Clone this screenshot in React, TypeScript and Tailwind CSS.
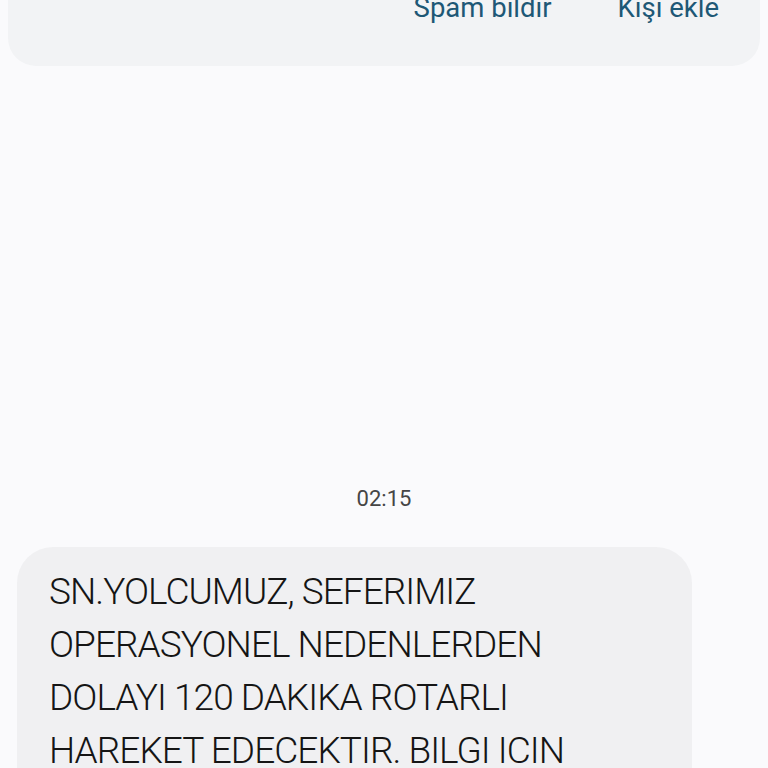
export default function App() {
  const lines = [
    "SN.YOLCUMUZ, SEFERIMIZ",
    "OPERASYONEL NEDENLERDEN",
    "DOLAYI 120 DAKIKA ROTARLI",
    "HAREKET EDECEKTIR. BILGI ICIN",
    "0850 222 00 00",
  ];
  return (
    <div
      className="w-[768px] h-[768px] overflow-hidden bg-[#fafafc] flex flex-col"
      style={{ fontFamily: "Roboto, 'Noto Sans', sans-serif" }}
    >
      <div className="mx-2 mt-[-40px] h-[106px] shrink-0 rounded-[28px] bg-[#f2f3f5] flex justify-end items-start pr-[41px] gap-[66px]">
        <span className="mt-[32px] text-[27.5px] leading-[32px] text-[#1e5876]">Spam bildir</span>
        <span className="mt-[32px] text-[27.5px] leading-[32px] text-[#1e5876]">Kişi ekle</span>
      </div>
      <div className="mt-[418px] h-[30px] text-center text-[22px] leading-[30px] text-[#454545]">02:15</div>
      <div className="mt-[33px] ml-[17px] w-[675px] shrink-0 rounded-[36px] bg-[#f0f0f2] pl-[32px] pr-[24px] pt-[18px] pb-[40px]">
        <p className="text-[37px] leading-[53px] font-light text-[#151515] tracking-[-0.95px] whitespace-nowrap">
          {lines.map((l, i) => (
            <span key={i} className="block">{l}</span>
          ))}
        </p>
      </div>
    </div>
  );
}
